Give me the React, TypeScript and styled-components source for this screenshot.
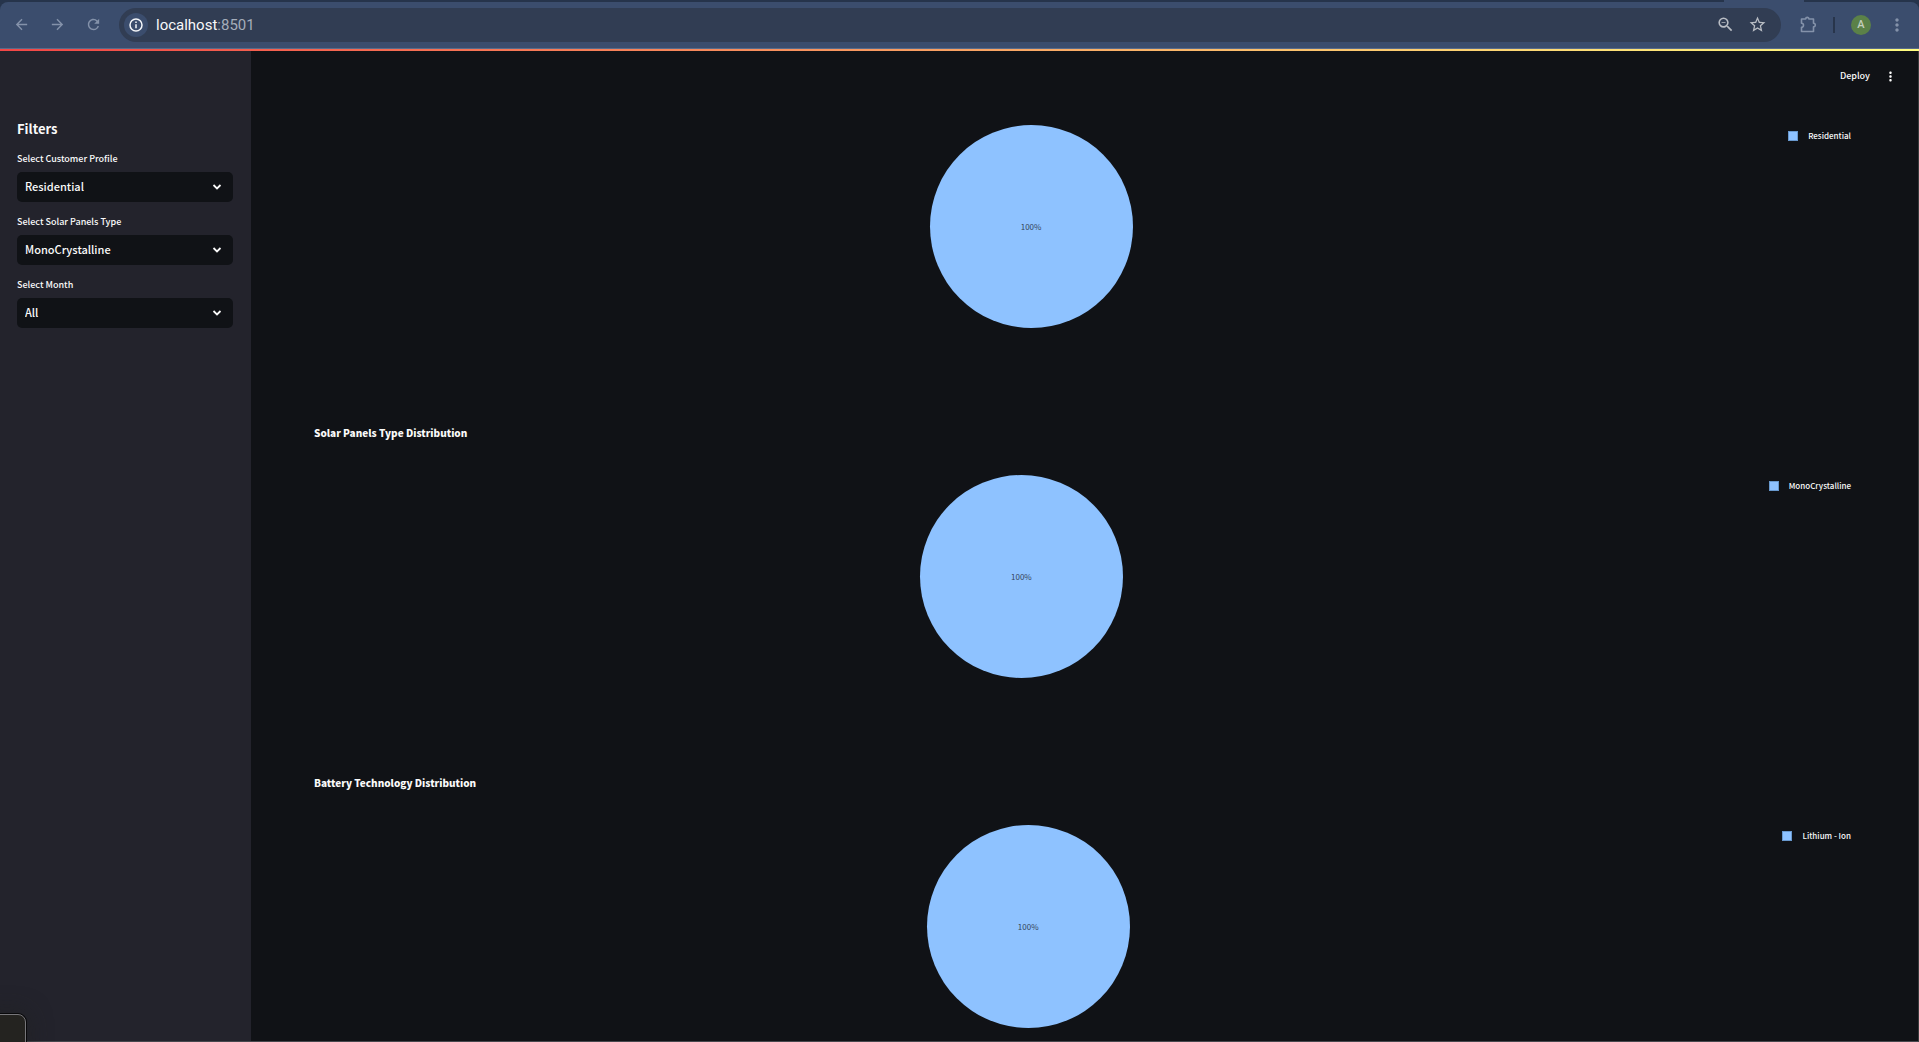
import React from "react";
import styled, { createGlobalStyle } from "styled-components";
import { MdArrowBack, MdArrowForward, MdRefresh, MdMoreVert, MdZoomOut, MdStarBorder } from "react-icons/md";

const GlobalStyle = createGlobalStyle`
  * { box-sizing: border-box; }
  body {
    margin: 0;
    background: #101216;
    color: #fafafa;
    font-family: "Source Sans Pro", "Noto Sans CJK SC", sans-serif;
    overflow: hidden;
  }
  button { border: 0; padding: 0; background: none; color: inherit; font: inherit; }
  h2, h3, p { margin: 0; }
`;

const Window = styled.div`
  height: 100vh;
  display: flex;
  flex-direction: column;
  overflow: hidden;
`;

const TabStrip = styled.div`
  flex: none;
  display: flex;
  height: 2px;
  padding-right: 115px;
  justify-content: flex-end;
  background: #26344b;
`;

const ActiveTab = styled.div`
  width: 80px;
  background: #3b4d6d;
`;

const ToolbarBack = styled.div`
  flex: none;
  background: #26344b;
`;

const Toolbar = styled.nav`
  display: flex;
  align-items: center;
  height: 47px;
  padding: 0 10px 1px 9px;
  border-bottom: 1px solid #586b8a;
  border-radius: 8px 8px 0 0;
  background: #3b4d6d;
  color: #8492aa;
`;

const NavButtons = styled.div`
  display: flex;
  gap: 12px;
`;

const IconButton = styled.button<{ $width?: number }>`
  display: grid;
  place-items: center;
  width: ${(p) => p.$width ?? 24}px;
  height: 24px;
`;

const AddressBar = styled.div`
  flex: 1;
  display: flex;
  align-items: center;
  gap: 8px;
  height: 34px;
  margin-left: 14px;
  padding: 0 12px 0 5px;
  border-radius: 17px;
  background: #313d53;
  color: #b9bdc4;
`;

const SiteInfo = styled(IconButton)`
  border-radius: 50%;
  background: #3b4d6d;
  color: #f4f6f9;
`;

const Url = styled.p`
  flex: 1;
  font: 400 15px/20px Roboto, Inter, sans-serif;
  color: #a5adba;

  span { color: #f7f8fa; }
`;

const BarActions = styled.div`
  display: flex;
  gap: 8px;
`;

const Extras = styled.div`
  display: flex;
  align-items: center;
  padding-left: 15px;
`;

const Divider = styled.div`
  width: 2px;
  height: 16px;
  margin: 0 16px 0 13px;
  background: #28354b;
`;

const Avatar = styled.button`
  width: 20px;
  height: 20px;
  margin-right: 14px;
  border-radius: 50%;
  background: #5b8148;
  color: #c3cebd;
  font: 500 11px/20px Roboto, sans-serif;
`;

const Decoration = styled.div`
  flex: none;
  height: 2px;
  background: linear-gradient(90deg, #f24646, #fffd80);
`;

const Page = styled.div`
  flex: 1;
  display: flex;
  min-height: 0;
  border-right: 1px solid #3a3c3d;
  border-bottom: 1px solid #47484e;
`;

const Sidebar = styled.aside`
  flex: none;
  width: 251px;
  padding: 66px 18px 0 17px;
  background: #23232c;
`;

const SidebarTitle = styled.h2`
  font-size: 13px;
  font-weight: 700;
  line-height: 24px;
  padding-bottom: 7px;
`;

const Field = styled.div`
  display: grid;
  margin-bottom: 9px;
`;

const Label = styled.label`
  padding-bottom: 2px;
  font-size: 9px;
  font-weight: 500;
  line-height: 22px;
`;

const SelectBox = styled.div`
  display: grid;
  align-items: center;

  > * { grid-area: 1 / 1; }
  > svg { justify-self: end; margin-right: 11px; pointer-events: none; }
`;

const Select = styled.select`
  appearance: none;
  width: 100%;
  height: 30px;
  padding: 0 30px 2px 8px;
  border: 0;
  border-radius: 5px;
  background: #101216;
  color: #fafafa;
  font-family: inherit;
  font-size: 11px;
  font-weight: 500;
`;

const Main = styled.main`
  flex: 1;
  min-width: 0;
  overflow: hidden;
`;

const AppHeader = styled.header`
  display: flex;
  justify-content: flex-end;
  align-items: center;
  gap: 12px;
  height: 43px;
  padding: 7px 20px 0 0;
`;

const DeployButton = styled.button`
  font-size: 9px;
  font-weight: 500;
  line-height: 20px;
`;

const Content = styled.div`
  padding: 0 67px 0 63px;
`;

const ChartTitle = styled.h3`
  padding-bottom: 2px;
  font-size: 10px;
  font-weight: 900;
  line-height: 18px;
`;

const ChartBody = styled.div`
  display: flex;
  align-items: flex-start;
  gap: 40px;
  padding: 31px 0 96px;
`;

const Plot = styled.div`
  flex: 1;
  display: flex;
  justify-content: center;
`;

const Pie = styled.div`
  display: grid;
  place-items: center;
  width: 203px;
  height: 203px;
  border-radius: 50%;
  background: #8ec2ff;
  color: #35455a;
  font-size: 8px;
  line-height: 12px;
`;

const Legend = styled.div`
  display: flex;
  align-items: center;
  gap: 10px;
  height: 12px;
  margin-top: 5px;
  font-size: 8px;
  font-weight: 500;
  line-height: 12px;
`;

const Swatch = styled.span`
  width: 10px;
  height: 10px;
  border: 1px solid #6898cd;
  background: #8ec2ff;
`;

const DockCorner = styled.div`
  position: fixed;
  left: -12px;
  bottom: -12px;
  width: 38px;
  height: 40px;
  border: 1px solid #77767a;
  border-radius: 8px;
  background: #242320;
  box-shadow: 0 0 0 1px #08080a, 0 0 24px rgba(32, 34, 34, 0.8);
`;

const InfoIcon = () => (
  <svg width="14" height="14" viewBox="0 0 14 14" fill="none" stroke="currentColor" strokeWidth="1.5" aria-hidden="true">
    <circle cx="7" cy="7" r="6" />
    <path d="M7 6.2v4M7 3.6v1.5" />
  </svg>
);

const ExtensionIcon = () => (
  <svg width="17" height="17" viewBox="0 0 17 17" fill="none" stroke="currentColor" strokeWidth="1.6" strokeLinejoin="round" aria-hidden="true">
    <path d="M1.5 3h4.2a1.6 1.6 0 0 1 3.2 0h4.6v4.3a1.8 1.8 0 0 1 0 3.6v4.6h-12v-4.3a2 2 0 0 0 0-4z" />
  </svg>
);

const Chevron = () => (
  <svg width="10" height="6" viewBox="0 0 10 6" fill="none" stroke="#fafafa" strokeWidth="1.8" aria-hidden="true">
    <path d="M1.5 1L5 4.4 8.5 1" />
  </svg>
);

function Filter({ id, label, options }: { id: string; label: string; options: string[] }) {
  return (
    <Field>
      <Label htmlFor={id}>{label}</Label>
      <SelectBox>
        <Select id={id}>
          {options.map((option) => (
            <option key={option}>{option}</option>
          ))}
        </Select>
        <Chevron />
      </SelectBox>
    </Field>
  );
}

function PieChart({ title, name }: { title?: string; name: string }) {
  return (
    <section>
      {title && <ChartTitle>{title}</ChartTitle>}
      <ChartBody>
        <Plot>
          <Pie>100%</Pie>
        </Plot>
        <Legend>
          <Swatch />
          {name}
        </Legend>
      </ChartBody>
    </section>
  );
}

export default function App() {
  return (
    <Window>
      <GlobalStyle />
      <TabStrip>
        <ActiveTab />
      </TabStrip>
      <ToolbarBack>
        <Toolbar>
          <NavButtons>
            <IconButton aria-label="Back"><MdArrowBack size={17} /></IconButton>
            <IconButton aria-label="Forward"><MdArrowForward size={17} /></IconButton>
            <IconButton aria-label="Reload"><MdRefresh size={17} /></IconButton>
          </NavButtons>
          <AddressBar>
            <SiteInfo aria-label="Site information"><InfoIcon /></SiteInfo>
            <Url><span>localhost</span>:8501</Url>
            <BarActions>
              <IconButton aria-label="Zoom"><MdZoomOut size={19} /></IconButton>
              <IconButton aria-label="Bookmark"><MdStarBorder size={19} /></IconButton>
            </BarActions>
          </AddressBar>
          <Extras>
            <IconButton aria-label="Extensions"><ExtensionIcon /></IconButton>
            <Divider />
            <Avatar>A</Avatar>
            <IconButton aria-label="Browser menu"><MdMoreVert size={20} /></IconButton>
          </Extras>
        </Toolbar>
      </ToolbarBack>
      <Decoration />
      <Page>
        <Sidebar>
          <SidebarTitle>Filters</SidebarTitle>
          <Filter id="profile" label="Select Customer Profile" options={["Residential"]} />
          <Filter id="panels" label="Select Solar Panels Type" options={["MonoCrystalline"]} />
          <Filter id="month" label="Select Month" options={["All"]} />
        </Sidebar>
        <Main>
          <AppHeader>
            <DeployButton>Deploy</DeployButton>
            <IconButton $width={16} aria-label="Main menu"><MdMoreVert size={15} /></IconButton>
          </AppHeader>
          <Content>
            <PieChart name="Residential" />
            <PieChart title="Solar Panels Type Distribution" name="MonoCrystalline" />
            <PieChart title="Battery Technology Distribution" name="Lithium - Ion" />
          </Content>
        </Main>
      </Page>
      <DockCorner />
    </Window>
  );
}
